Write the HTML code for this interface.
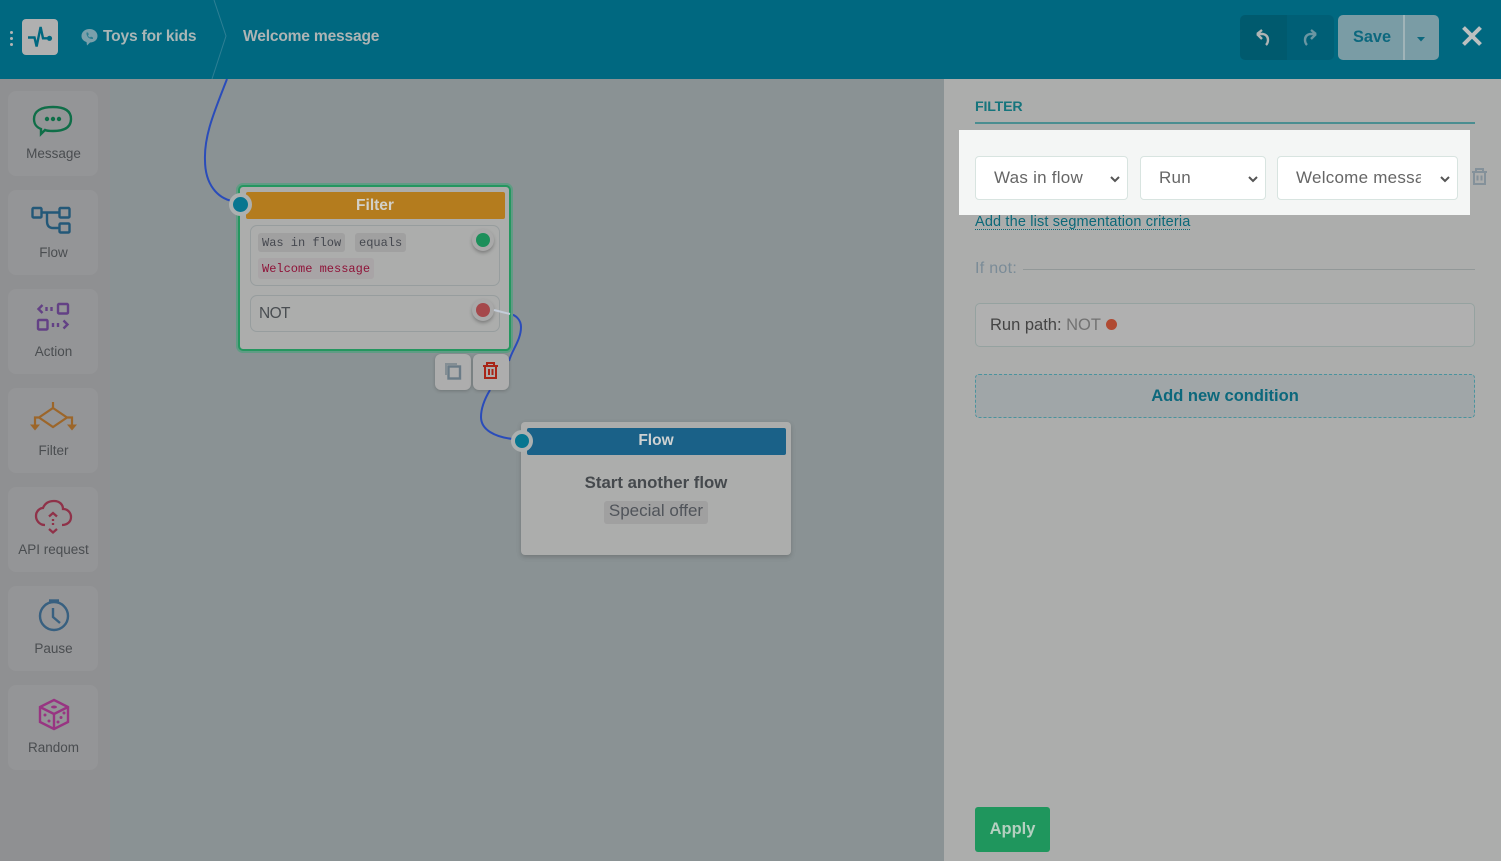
<!DOCTYPE html>
<html lang="en"><head><meta charset="utf-8"><title>Welcome message</title>
<style>
*{box-sizing:border-box}
html,body{margin:0;padding:0}
body{width:1501px;height:861px;overflow:hidden;position:relative;background:#8a9294;font-family:"Liberation Sans",sans-serif;color:#555}
.a{position:absolute}
.t{position:absolute;white-space:nowrap;line-height:1}
.side{left:0;top:79px;width:110px;height:782px;background:#8f9092}
.tool{position:absolute;left:8px;width:90px;height:85px;background:#949597;border-radius:8px}
.tool span{position:absolute;left:0;right:0;top:55px;text-align:center;font-size:13.5px;line-height:16px;color:#4a4d50;padding-left:1px}
.tool svg{position:absolute;left:0;top:0}
.mono{font-family:"Liberation Mono",monospace;font-size:12px;line-height:1}
.chip{position:absolute;background:#a0a0a0;border-radius:3px;color:#45484f;height:19px;line-height:19px;padding:0 4px;white-space:nowrap}
.sel{position:absolute;top:156px;height:44px;background:#fff;border:1px solid #d8e4e0;border-radius:4px;font-size:17px;line-height:42px;color:#666;overflow:hidden;white-space:nowrap;letter-spacing:.25px}
</style></head><body>

<!-- sidebar -->
<div class="a side"></div>
<div class="tool" style="top:91px"><svg width="90" height="60" fill="none" stroke="#0f6e48" stroke-width="2.4"><path d="M26 28 C26 20 33 16 45 16 C57 16 63 20 63 28 C63 36 57 40 45 40 C42 40 39 40 37 39 L33 43 L33 38 C28 36 26 33 26 28 Z"/><g fill="#0f6e48" stroke="none"><circle cx="39" cy="28" r="2.2"/><circle cx="45" cy="28" r="2.2"/><circle cx="51" cy="28" r="2.2"/></g></svg><span>Message</span></div>
<div class="tool" style="top:190px"><svg width="90" height="60" fill="none" stroke="#235878" stroke-width="2.4"><rect x="24.5" y="18" width="9" height="9.5" rx="1"/><rect x="51.5" y="18" width="10" height="9.5" rx="1"/><rect x="51.5" y="33.5" width="10" height="9" rx="1"/><path d="M33 22.5 H52 M39 22.5 V31 Q39 38 45 38 H52"/></svg><span>Flow</span></div>
<div class="tool" style="top:289px"><svg width="90" height="60" fill="none" stroke="#634185" stroke-width="2.4"><rect x="50" y="15" width="10" height="9.5" rx="1"/><rect x="30" y="31" width="9.5" height="9.5" rx="1"/><path d="M34.5 16 L30.5 20 L34.5 24 M38.5 18 V22 M43.5 18 V22 M45 34 V38 M50 34 V38 M55.5 31.5 L59.5 35.5 L55.5 39.5"/></svg><span>Action</span></div>
<div class="tool" style="top:388px"><svg width="90" height="60" fill="#9c662a" stroke="#9c662a" stroke-width="2.2"><path fill="none" d="M45 14 V20 M45 20 L59 29.5 L45 39 L31 29.5 Z M31 29.5 H27 V38 M59 29.5 H64 V38"/><path stroke="none" d="M22 36.5 H32 L27 42.5 Z M59 36.5 H69 L64 42.5 Z"/></svg><span>Filter</span></div>
<div class="tool" style="top:487px"><svg width="90" height="60" fill="none" stroke="#8f3249" stroke-width="2.3"><path d="M37 38 C31 38 28 33 28 29 C28 24 32 21 35 21 C37 16 41 14 46 14 C52 14 55 18 55 22 C60 22 63 26 63 30 C63 35 59 38 54 38"/><path d="M41 29.5 L45 26 L49 29.5 M41 42 L45 45.5 L49 42 M45 32 V34 M45 36 V38"/></svg><span>API request</span></div>
<div class="tool" style="top:586px"><svg width="90" height="60" fill="none" stroke="#386080" stroke-width="2.4"><circle cx="46" cy="30" r="14"/><path d="M41 14.5 H51"/><path d="M45 22 V31 L52 37"/></svg><span>Pause</span></div>
<div class="tool" style="top:685px"><svg width="90" height="60" fill="none" stroke="#983582" stroke-width="2.4"><path d="M46 15 L60 22 V37 L46 44 L32 37 V22 Z M32 22 L46 29 L60 22 M46 29 V44"/><g fill="#983582" stroke="none"><ellipse cx="46" cy="22" rx="3" ry="1.5"/><circle cx="37" cy="30" r="1.5"/><circle cx="41" cy="36" r="1.5"/><circle cx="50" cy="37" r="1.5"/><circle cx="53" cy="32.5" r="1.5"/><circle cx="56" cy="28" r="1.5"/></g></svg><span>Random</span></div>

<!-- connectors -->
<svg class="a" style="left:0;top:0" width="944" height="861" fill="none" stroke="#2a4cba" stroke-width="2">
<path d="M227 79 C215 110 204 135 205 160 C205 185 218 198 232 201"/>
<path d="M510 314 C516 315 521 320 521 327 C521 340 512 350 509 361"/>
<path d="M490 390 C484 400 481 408 481 417 C481 430 495 437 513 439"/>
</svg>

<!-- Filter node -->
<div class="a" style="left:236px;top:183px;width:277px;height:170px;background:#5f9c84;border-radius:7px"></div>
<div class="a" style="left:238px;top:185px;width:273px;height:166px;background:#acadac;border:2px solid #25965f;border-radius:5px"></div>
<div class="a" style="left:246px;top:192px;width:259px;height:27px;background:#b47c1e;border-radius:2px;color:#d2d0c8;font-weight:bold;font-size:15.5px;line-height:27px;text-align:center;padding-right:1px">Filter</div>
<div class="a" style="left:250px;top:225px;width:250px;height:61px;border:1px solid #979d9e;border-radius:7px"></div>
<div class="chip mono" style="left:258px;top:233px;line-height:20px">Was in flow</div>
<div class="chip mono" style="left:355px;top:233px;line-height:20px">equals</div>
<div class="chip mono" style="left:258px;top:258px;height:21px;line-height:22px;background:#a8a4a6;color:#8f1238">Welcome message</div>
<div class="a" style="left:250px;top:295px;width:250px;height:37px;border:1px solid #979d9e;border-radius:7px"></div>
<div class="t" style="left:259px;top:306px;font-size:15.5px;color:#4a4e52;letter-spacing:-.6px">NOT</div>
<div class="a" style="left:472px;top:229px;width:22px;height:22px;border-radius:50%;background:#a9a9a9;box-shadow:0 2px 3px rgba(60,60,60,.4)"></div>
<div class="a" style="left:476px;top:233px;width:14px;height:14px;border-radius:50%;background:#1c8f5a"></div>
<div class="a" style="left:472px;top:299px;width:22px;height:22px;border-radius:50%;background:#a9a9a9;box-shadow:0 2px 3px rgba(60,60,60,.4)"></div>
<div class="a" style="left:476px;top:303px;width:14px;height:14px;border-radius:50%;background:#a5484b"></div>
<div class="a" style="left:229px;top:193px;width:23px;height:23px;border-radius:50%;background:#077690;border:4px solid #acb0b0"></div>
<svg class="a" style="left:490px;top:305px" width="24" height="14" fill="none"><path d="M4 5 L20 9" stroke="#c4ccd8" stroke-width="2"/></svg>

<!-- node actions -->
<div class="a" style="left:435px;top:354px;width:36px;height:36px;background:#adadad;border-radius:6px;box-shadow:0 1px 3px rgba(50,50,50,.3)"><svg width="36" height="36" fill="none" stroke="#6a7b87" stroke-width="2"><path d="M11 21 V10 H22" stroke="#848e94"/><rect x="13.5" y="12.5" width="11.5" height="12" stroke-width="2.4"/></svg></div>
<div class="a" style="left:473px;top:354px;width:36px;height:36px;background:#adadad;border-radius:6px;box-shadow:0 1px 3px rgba(50,50,50,.3)"><svg width="36" height="36" fill="none" stroke="#a82518" stroke-width="2"><path d="M10 12 H25 M14 12 V9 H21 V12 M12 12 V24 H23 V12 M16 15 V21 M19.5 15 V21"/></svg></div>

<!-- Flow node -->
<div class="a" style="left:521px;top:422px;width:270px;height:133px;background:#acadac;border-radius:4px;box-shadow:0 2px 5px rgba(60,60,60,.3)"></div>
<div class="a" style="left:527px;top:428px;width:259px;height:27px;background:#1a6188;border-radius:2px;color:#cfd2d2;font-weight:bold;font-size:15.5px;line-height:26px;text-align:center;padding-right:1px">Flow</div>
<div class="a" style="left:511px;top:430px;width:22px;height:22px;border-radius:50%;background:#077690;border:4px solid #acb0b0"></div>
<div class="a" style="left:521px;top:473px;width:270px;text-align:center;font-weight:bold;font-size:16.8px;line-height:20px;color:#45494d">Start another flow</div>
<div class="a" style="left:604px;top:501px;width:104px;height:23px;background:#a0a0a0;border-radius:3px;text-align:center;font-size:17px;line-height:20px;color:#50545a">Special offer</div>

<!-- right panel -->
<div class="a" style="left:944px;top:79px;width:557px;height:782px;background:#acadac"></div>
<div class="t" style="left:975px;top:100px;font-size:14.2px;font-weight:bold;color:#16757d;letter-spacing:-.2px">FILTER</div>
<div class="a" style="left:975px;top:122px;width:500px;height:2px;background:#4a8d90"></div>

<div class="a" style="left:1472px;top:167px"><svg width="15" height="18" fill="none" stroke="#84919a" stroke-width="2"><path d="M0 5 H15 M4 5 V2 H11 V5 M2 5 V17 H13 V5 M5.5 8.5 V13.5 M9.5 8.5 V13.5"/></svg></div>

<div class="t" style="left:975px;top:215px;height:15px;font-size:14.5px;line-height:14px;color:#0b6878;border-bottom:1px dotted #0b6878;letter-spacing:.15px">Add the list segmentation criteria</div>

<div class="a" style="left:959px;top:130px;width:511px;height:85px;background:#f4f6f5"></div>
<div class="sel" style="left:975px;width:153px;padding-left:18px">Was in flow<svg class="a" style="right:6px;top:18px" width="12" height="8" fill="none" stroke="#555" stroke-width="2"><path d="M2 2 L6 6 L10 2"/></svg></div>
<div class="sel" style="left:1140px;width:126px;padding-left:18px">Run<svg class="a" style="right:6px;top:18px" width="12" height="8" fill="none" stroke="#555" stroke-width="2"><path d="M2 2 L6 6 L10 2"/></svg></div>
<div class="sel" style="left:1277px;width:181px;padding-left:18px"><div style="width:125px;overflow:hidden">Welcome message</div><svg class="a" style="right:6px;top:18px" width="12" height="8" fill="none" stroke="#555" stroke-width="2"><path d="M2 2 L6 6 L10 2"/></svg></div>

<div class="t" style="left:975px;top:261px;font-size:16px;color:#7a8b97;letter-spacing:.3px">If not:</div>
<div class="a" style="left:1023px;top:269px;width:452px;height:1px;background:#929898"></div>

<div class="a" style="left:975px;top:303px;width:500px;height:44px;background:#b0b0b0;border:1px solid #95a2a0;border-radius:5px"></div>
<div class="t" style="left:990px;top:317px;font-size:16.5px;color:#444">Run path: <span style="color:#727272">NOT</span></div>
<div class="a" style="left:1106px;top:319px;width:11px;height:11px;border-radius:50%;background:#b04a32"></div>

<div class="a" style="left:975px;top:374px;width:500px;height:44px;background:#a0a6a8;border:1px dashed #4a939d;border-radius:4px;text-align:center;font-weight:bold;font-size:16.5px;line-height:43px;color:#0c687c">Add new condition</div>

<div class="a" style="left:975px;top:807px;width:75px;height:45px;background:#1f965d;border-radius:3px;text-align:center;font-weight:bold;font-size:16.5px;line-height:44px;color:#b4d0c0">Apply</div>

<!-- header -->
<div class="a" style="left:0;top:0;width:1501px;height:79px;background:#006880"></div>
<svg class="a" style="left:0;top:0" width="300" height="79" fill="none"><path d="M214 0 L226 36 L212 79" stroke="#2d7f94" stroke-width="1"/></svg>
<div class="a" style="left:10px;top:31px;width:3px;height:3px;background:#b4b4b4;border-radius:50%;box-shadow:0 6px 0 #b4b4b4,0 12px 0 #b4b4b4"></div>
<div class="a" style="left:22px;top:19px;width:36px;height:36px;background:#b0b0b0;border-radius:4px"><svg width="36" height="36" fill="none" stroke="#006880" stroke-width="2.4"><path d="M6 18.5 H12.5 L14.6 27.5 L18.6 8 L21 19.3 H27"/><circle cx="27.5" cy="19.3" r="2.6" fill="#006880" stroke="none"/></svg></div>
<svg class="a" style="left:81px;top:28px" width="17" height="18"><path d="M8.5 1 C13 1 16.5 4 16.5 8 C16.5 12 13 14.5 9 14.5 L6 17.5 L5.5 14 C2.5 13 .5 11 .5 8 C.5 4 4 1 8.5 1 Z" fill="#7aa0ab"/><path d="M5.5 4.5 C5 8 8 11.5 12 11 L12 9.5 L10 8.6 L9 9.4 C8 9 7.3 8.2 7 7.2 L7.8 6.4 L7 4.5 Z" fill="#2c7d90"/></svg>
<div class="t" style="left:103px;top:29px;font-size:15.6px;font-weight:bold;color:#aab6b6;letter-spacing:-.2px">Toys for kids</div>
<div class="t" style="left:243px;top:29px;font-size:15.6px;font-weight:bold;color:#aeb4b4;letter-spacing:-.2px">Welcome message</div>

<div class="a" style="left:1240px;top:15px;width:47px;height:45px;background:#005a6e;border-radius:5px 0 0 5px"><svg width="47" height="45" fill="none" stroke="#b0b4b4" stroke-width="2.4"><path d="M17 19 L22 15 M17 19 L22 24 M17 19 H23 Q28 20 28 25 Q28 28 26 30"/></svg></div>
<div class="a" style="left:1287px;top:15px;width:47px;height:45px;background:#005f76;border-radius:0 5px 5px 0"><svg width="47" height="45" fill="none" stroke="#6a96a2" stroke-width="2.4"><path d="M29 19 L24 15 M29 19 L24 24 M29 19 H23 Q18 20 18 25 Q18 28 20 30"/></svg></div>
<div class="a" style="left:1338px;top:15px;width:101px;height:45px;background:#7a9ca5;border-radius:5px"></div>
<div class="a" style="left:1403px;top:15px;width:2px;height:45px;background:#a0b4b8"></div>
<div class="t" style="left:1353px;top:29px;font-size:16.3px;font-weight:bold;color:#0c687e">Save</div>
<svg class="a" style="left:1416px;top:37px" width="10" height="5"><path d="M1 0 H9 L5 4.5 Z" fill="#0c687e"/></svg>
<svg class="a" style="left:1462px;top:26px" width="20" height="20" fill="none" stroke="#bcc0c0" stroke-width="4"><path d="M1.5 1.5 L18.5 18.5 M18.5 1.5 L1.5 18.5"/></svg>

</body></html>
